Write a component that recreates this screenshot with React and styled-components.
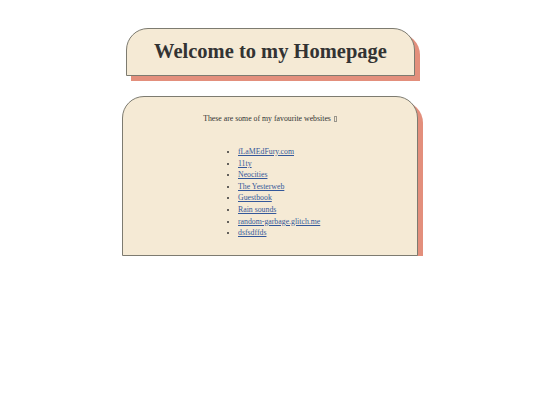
import React from "react";
import styled, { createGlobalStyle } from "styled-components";

const Global = createGlobalStyle`
  html, body { margin: 0; padding: 0; background: #ffffff; }
  body { font-family: "Liberation Serif", "Times New Roman", serif; color: #333333; }
`;

const Page = styled.div`
  display: flex;
  flex-direction: column;
  align-items: center;
  padding-top: 28px;
`;

const Card = styled.div`
  box-sizing: border-box;
  width: ${(p) => p.$w}px;
  background: #f5ead5;
  border: 1px solid #7d7b70;
  border-radius: 22px 22px 0 0;
  box-shadow: 5px 5px 0 #e38f7c;
  margin-left: ${(p) => p.$shift || 0}px;
`;

const Header = styled(Card)`
  height: 48px;
  display: flex;
  align-items: center;
  justify-content: center;
`;

const Title = styled.h1`
  margin: 0;
  font-size: 20.5px;
  font-weight: bold;
  color: #333333;
  padding-bottom: 1px;
`;

const Main = styled(Card)`
  margin-top: 20px;
  height: 160px;
  padding-top: 16px;
`;

const Intro = styled.p`
  margin: 0;
  text-align: center;
  font-size: 7.8px;
  line-height: 11px;
`;

const Tofu = styled.span`
  display: inline-block;
  box-sizing: border-box;
  width: 3px;
  height: 6px;
  border: 0.5px solid #9a968c;
  margin-left: 1px;
  vertical-align: -0.5px;
`;

const List = styled.ul`
  margin: 22px 0 0 115px;
  padding: 0;
  list-style: disc outside;
  font-size: 7.8px;
  line-height: 11.6px;
`;

const Item = styled.li`
  padding-left: 0;
`;

const Link = styled.a`
  color: #34589a;
  text-decoration: underline;
`;

const links = [
  "fLaMEdFury.com",
  "11ty",
  "Neocities",
  "The Yesterweb",
  "Guestbook",
  "Rain sounds",
  "random-garbage.glitch.me",
  "dsfsdffds",
];

export default function App() {
  return (
    <>
      <Global />
      <Page>
        <Header $w={289} $shift={1}>
          <Title>Welcome to my Homepage</Title>
        </Header>
        <Main $w={296} $shift={0}>
          <Intro>
            These are some of my favourite websites <Tofu aria-hidden="true" />
          </Intro>
          <List>
            {links.map((l) => (
              <Item key={l}>
                <Link href="#">{l}</Link>
              </Item>
            ))}
          </List>
        </Main>
      </Page>
    </>
  );
}
